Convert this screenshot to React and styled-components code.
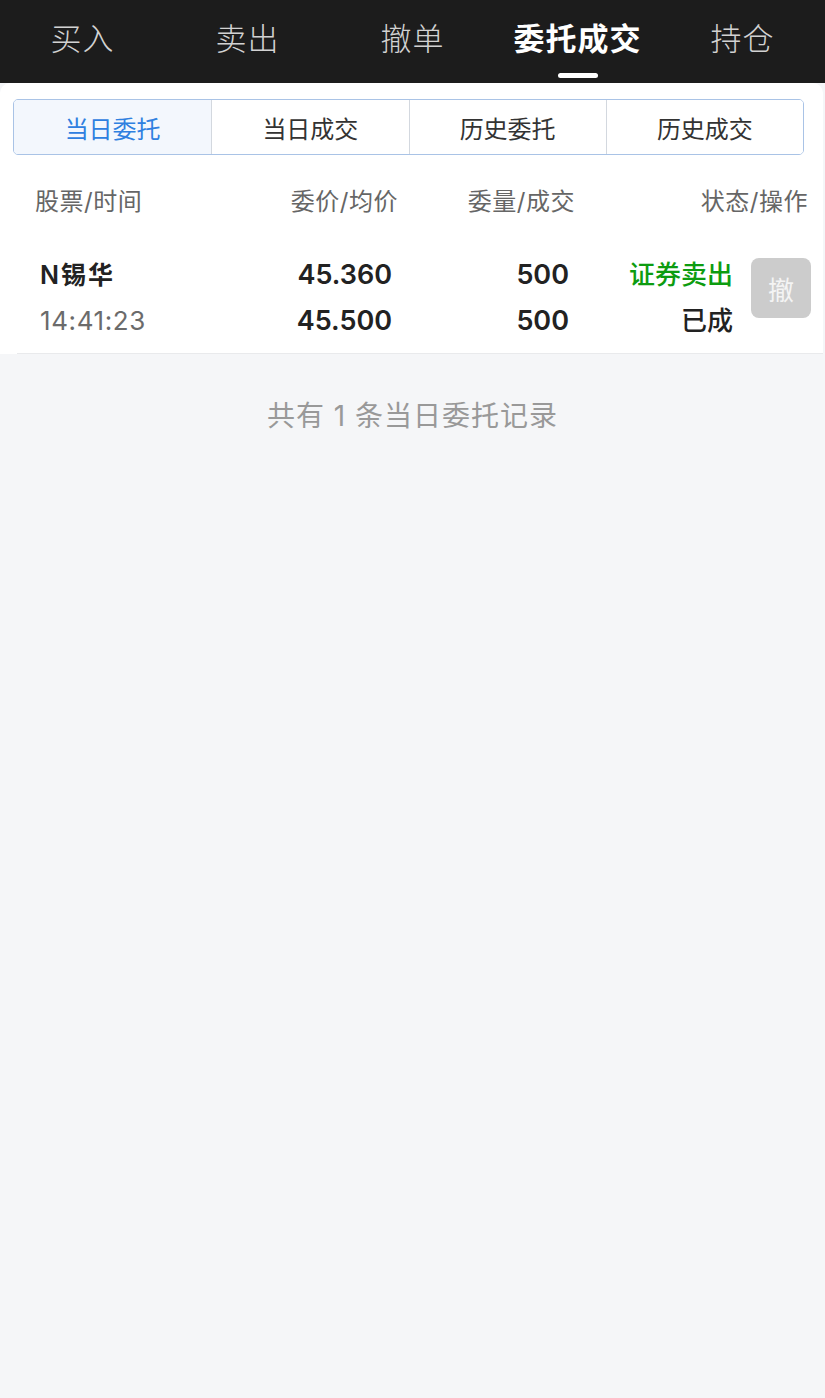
import React, { useState } from "react";
import styled, { createGlobalStyle } from "styled-components";

const GlobalStyle = createGlobalStyle`
  html, body {
    margin: 0;
    padding: 0;
    background: #1c1c1c;
  }
  body {
    font-family: Inter, "Noto Sans CJK SC", sans-serif;
  }
`;

const navItems = ["买入", "卖出", "撤单", "委托成交", "持仓"];
const segItems = ["当日委托", "当日成交", "历史委托", "历史成交"];

export default function App() {
  const [nav, setNav] = useState(3);
  const [seg, setSeg] = useState(0);

  return (
    <Page>
      <GlobalStyle />
      <TopNav>
        {navItems.map((item, i) => (
          <NavTab key={item} $active={nav === i} onClick={() => setNav(i)}>
            {item}
          </NavTab>
        ))}
      </TopNav>
      <Panel>
        <Segment>
          {segItems.map((item, i) => (
            <SegButton key={item} $active={seg === i} onClick={() => setSeg(i)}>
              {item}
            </SegButton>
          ))}
        </Segment>
        <HeadRow>
          <span>股票/时间</span>
          <HeadCell>委价/均价</HeadCell>
          <HeadCell>委量/成交</HeadCell>
          <HeadCell>状态/操作</HeadCell>
        </HeadRow>
        <OrderRow>
          <Cell>
            <Name>N锡华</Name>
            <Time>14:41:23</Time>
          </Cell>
          <NumCell>
            <span>45.360</span>
            <span>45.500</span>
          </NumCell>
          <NumCell>
            <span>500</span>
            <span>500</span>
          </NumCell>
          <NumCell>
            <Status $sell>证券卖出</Status>
            <Status>已成</Status>
          </NumCell>
          <CancelButton>撤</CancelButton>
        </OrderRow>
      </Panel>
      <Footer>共有 1 条当日委托记录</Footer>
    </Page>
  );
}

const Page = styled.div`
  min-height: 1398px;
  background: #f5f6f8;
  display: flex;
  flex-direction: column;
`;

const TopNav = styled.nav`
  height: 83px;
  background: #1c1c1c;
  display: grid;
  grid-template-columns: repeat(5, 1fr);
`;

const NavTab = styled.div`
  position: relative;
  display: flex;
  justify-content: center;
  padding-top: 19px;
  font-size: 31px;
  line-height: 40px;
  letter-spacing: 1px;
  color: ${(p) => (p.$active ? "#ffffff" : "#d2d2d2")};
  font-weight: ${(p) => (p.$active ? 600 : 300)};
  cursor: pointer;
  &::after {
    content: "";
    display: ${(p) => (p.$active ? "block" : "none")};
    position: absolute;
    left: 50%;
    top: 73px;
    width: 40px;
    height: 5px;
    margin-left: -20px;
    border-radius: 3px;
    background: #ffffff;
  }
`;

const Panel = styled.section`
  margin-right: 2px;
  border-radius: 10px 10px 0 0;
  background: #ffffff;
  padding-top: 16px;
`;

const Segment = styled.div`
  margin: 0 19px 0 13px;
  height: 56px;
  box-sizing: border-box;
  display: grid;
  grid-template-columns: repeat(4, 1fr);
  border: 1px solid #a9c3e6;
  border-radius: 5px;
  overflow: hidden;
`;

const SegButton = styled.div`
  display: flex;
  align-items: center;
  justify-content: center;
  font-size: 24px;
  color: ${(p) => (p.$active ? "#2f80e0" : "#333333")};
  background: ${(p) => (p.$active ? "#f3f7fd" : "#ffffff")};
  & + & {
    border-left: 1px solid #d3d8df;
  }
  cursor: pointer;
`;

const HeadRow = styled.div`
  display: grid;
  grid-template-columns: 215px 148px 177px 233px;
  padding: 30px 0 0 35px;
  height: 34px;
  font-size: 24px;
  letter-spacing: 0.5px;
  line-height: 34px;
  color: #666666;
`;

const HeadCell = styled.span`
  text-align: right;
`;

const OrderRow = styled.div`
  display: grid;
  grid-template-columns: 210px 142px 177px 164px 60px;
  align-items: center;
  margin-left: 17px;
  padding: 38px 0 14px 23px;
  border-bottom: 1px solid #e9eaec;
  & > :last-child {
    margin-left: 18px;
  }
`;

const Cell = styled.div`
  display: flex;
  flex-direction: column;
  gap: 10px;
`;

const NumCell = styled(Cell)`
  align-items: flex-end;
  font-size: 27px;
  font-weight: 600;
  line-height: 36px;
  color: #222222;
`;

const Name = styled.span`
  font-size: 25px;
  font-weight: 600;
  letter-spacing: 2px;
  line-height: 36px;
  color: #222222;
`;

const Time = styled.span`
  font-size: 26px;
  letter-spacing: 0.6px;
  line-height: 36px;
  color: #6b6b6b;
`;

const Status = styled.span`
  color: ${(p) => (p.$sell ? "#0d9c10" : "#222222")};
  font-size: 26px;
  font-weight: 500;
`;

const CancelButton = styled.button`
  width: 60px;
  height: 60px;
  margin-top: -20px;
  border: none;
  border-radius: 8px;
  background: #cccccc;
  color: #f4f4f4;
  font-family: inherit;
  font-size: 26px;
  padding: 0;
`;

const Footer = styled.div`
  padding-top: 42px;
  text-align: center;
  font-size: 28px;
  letter-spacing: 1px;
  line-height: 40px;
  color: #999999;
`;
